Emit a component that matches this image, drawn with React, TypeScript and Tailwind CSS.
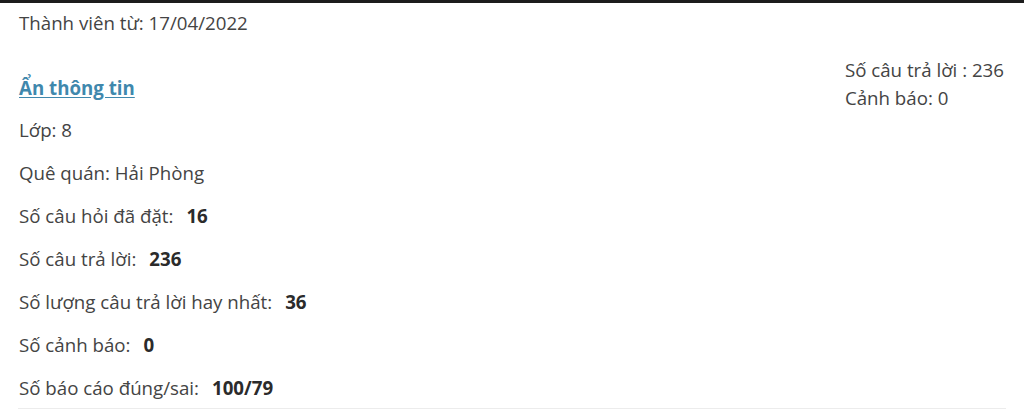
const rows: [string, string][] = [
  ['Số câu hỏi đã đặt:', '16'],
  ['Số câu trả lời:', '236'],
  ['Số lượng câu trả lời hay nhất:', '36'],
  ['Số cảnh báo:', '0'],
  ['Số báo cáo đúng/sai:', '100/79'],
];

export default function App() {
  return (
    <div className="h-[415px] w-[1024px] overflow-hidden bg-white font-['Open_Sans',sans-serif] text-[18.7px] text-[#444]">
      <div className="h-[3px] bg-[#1c1c1c]" />
      <div className="mx-[18px] flex justify-between border-b border-[#ececec] pb-[8px]">
        <div className="flex flex-col pl-px">
          <div className="mt-[8px] leading-[24px]">Thành viên từ: 17/04/2022</div>
          <a
            href="#"
            className="mt-[41px] font-bold leading-[24px] text-[#3f88ad] underline underline-offset-2"
          >
            Ẩn thông tin
          </a>
          <div className="mt-[18px] flex flex-col gap-[19px] leading-[24px]">
            <div>Lớp: 8</div>
            <div>Quê quán: Hải Phòng</div>
            {rows.map(([label, value]) => (
              <div key={label}>
                {label}
                <span className="ml-[13px] font-bold text-[#2b2b2b]">{value}</span>
              </div>
            ))}
          </div>
        </div>
        <div className="mr-[2px] mt-[53px] flex flex-col leading-[28px]">
          <div>Số câu trả lời : 236</div>
          <div>Cảnh báo: 0</div>
        </div>
      </div>
    </div>
  );
}
